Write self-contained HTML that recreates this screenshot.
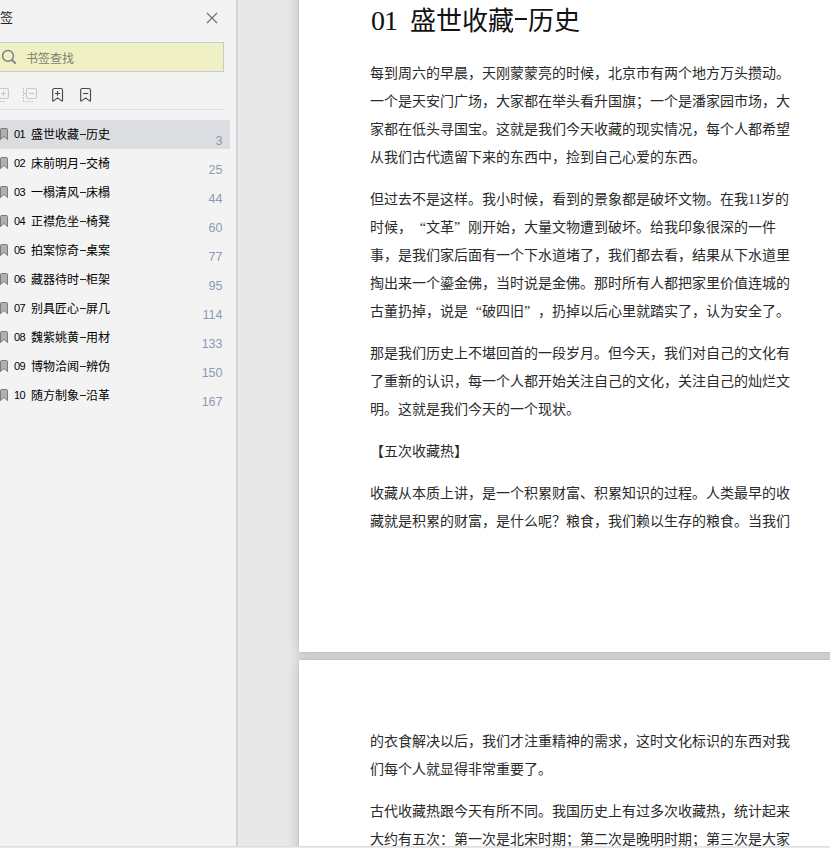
<!DOCTYPE html>
<html lang="zh-CN">
<head>
<meta charset="utf-8">
<style>
html,body{margin:0;padding:0;}
body{width:830px;height:848px;overflow:hidden;position:relative;background:#e8e8e8;font-family:"Liberation Sans",sans-serif;}
.abs{position:absolute;}
#side{left:0;top:0;width:236px;height:848px;background:#f3f3f3;}
#sideline{left:236px;top:0;width:2px;height:848px;background:#d4d5d9;}
#title{left:-13px;top:10.5px;font-size:13px;color:#222;line-height:14px;}
#search{left:-1px;top:42px;width:223px;height:28px;border:1px solid #c7cbd4;background:#eff0c4;}
#search .ph{position:absolute;left:26px;top:9px;font-size:12px;line-height:14px;color:#7e8070;}
#sep{left:0;top:109px;width:224px;height:1px;background:#dcdde0;}
#sel{left:0;top:120px;width:230px;height:29px;background:#dcdde1;}
.row{position:absolute;left:0;height:29px;width:230px;}
.row .bm{position:absolute;left:0;top:8px;}
.row .num{position:absolute;left:14px;top:7px;font-size:11px;letter-spacing:-0.6px;line-height:14px;color:#000;}
.row .txt{position:absolute;left:31px;top:7.5px;font-size:12px;line-height:14px;color:#000;}
.row .pg{position:absolute;right:7.5px;top:13.8px;font-size:12.5px;line-height:14px;color:#8c9ab5;}
#mid{left:238px;top:0;width:592px;height:848px;background:#e8e8e8;}
.page{position:absolute;left:299px;width:600px;background:#fff;}
.shd{position:absolute;left:299px;width:600px;background:#fff;box-shadow:0 0 12px 1px rgba(0,0,0,0.18), 0 0 2px 0 rgba(0,0,0,0.14);}
#p1{top:-50px;height:702px;}
#p2{top:660px;height:300px;}
#shadow{left:287px;top:0;width:12px;height:848px;background:linear-gradient(to right,rgba(0,0,0,0),rgba(0,0,0,0.12));}
#edge{left:298px;top:0;width:1px;height:848px;background:rgba(0,0,0,0.08);}
#gap{left:299px;top:652px;width:531px;height:8px;background:#d0d0d0;}
.ln{position:absolute;left:370px;margin-top:1px;font-family:"Liberation Serif",serif;font-size:14px;line-height:28px;height:28px;white-space:pre;color:#2a2a2a;}
.q{display:inline-block;width:14px;}
.hy{display:inline-block;width:6px;height:1px;background:#222;vertical-align:middle;margin:0 0.5px;position:relative;top:-1px;font-size:0;}
.hy2{display:inline-block;width:12px;height:1.5px;background:#111;vertical-align:middle;margin:0 1px 0 1px;position:relative;top:-5px;font-size:0;}
.ql{text-align:right;}
#h1{position:absolute;left:371px;top:5px;font-family:"Liberation Serif",serif;font-size:26px;line-height:32px;white-space:pre;color:#111;}
</style>
</head>
<body>
<div id="side" class="abs"></div>
<div id="sideline" class="abs"></div>
<div id="title" class="abs">书签</div>
<svg class="abs" style="left:206px;top:12px" width="12" height="12" viewBox="0 0 12 12"><path d="M1 1L11 11M11 1L1 11" stroke="#6d6d6d" stroke-width="1.1" fill="none"/></svg>
<div id="search" class="abs">
 <svg style="position:absolute;left:2px;top:6px" width="17" height="17" viewBox="0 0 17 17"><circle cx="6" cy="6.9" r="5.4" stroke="#757f84" stroke-width="1.45" fill="none"/><path d="M9.9 10.8L13.7 14.6" stroke="#757f84" stroke-width="1.8"/></svg>
 <div class="ph">书签查找</div>
</div>
<!-- toolbar -->
<svg class="abs" style="left:0;top:84px" width="100" height="22" viewBox="0 0 100 22">
 <g stroke="#c8c8c8" stroke-width="1.1" fill="none">
  <rect x="-1.6" y="4.5" width="10" height="10" rx="1.6"/>
  <path d="M3.5 7v5M1 9.5h5"/>
  <path d="M0 17.5h6" stroke-dasharray="2 1"/>
  <path d="M23.5 4v14" stroke-dasharray="2 1"/>
  <path d="M23.5 9.5h3"/>
  <rect x="26.5" y="4.5" width="10" height="10" rx="1.6"/>
  <path d="M29 9.5h5"/>
  <path d="M25 17.5h9" stroke-dasharray="2 1"/>
 </g>
 <g stroke="#4a4a4a" stroke-width="1.15" fill="none" stroke-linejoin="round">
  <path d="M52.7 6Q52.7 4.5 54.2 4.5H61.0Q62.5 4.5 62.5 6V16.4Q62.5 17.6 61.6 16.9L57.6 13.9L53.6 16.9Q52.7 17.6 52.7 16.4Z"/>
  <path d="M57.5 7v4.8M55 9.5h5"/>
  <path d="M80.7 6Q80.7 4.5 82.2 4.5H89.0Q90.5 4.5 90.5 6V16.4Q90.5 17.6 89.60000000000001 16.9L85.60000000000001 13.9L81.60000000000001 16.9Q80.7 17.6 80.7 16.4Z"/>
  <path d="M83.1 9.5h5.1"/>
 </g>
</svg>
<div id="sep" class="abs"></div>
<div id="sel" class="abs"></div>
<div class="row" style="top:120px"><svg class="bm" width="9" height="13" viewBox="0 0 9 13"><path d="M0.5 1.5Q0.5 0.5 1.5 0.5H6.5Q7.5 0.5 7.5 1.5V11.6L4 8.4L0.5 11.6Z" fill="#b0b0b0" stroke="#7a7a7a" stroke-width="1" stroke-linejoin="round"/></svg><div class="num">01</div><div class="txt">盛世收藏<span class="hy">-</span>历史</div><div class="pg">3</div></div>
<div class="row" style="top:149px"><svg class="bm" width="9" height="13" viewBox="0 0 9 13"><path d="M0.5 1.5Q0.5 0.5 1.5 0.5H6.5Q7.5 0.5 7.5 1.5V11.6L4 8.4L0.5 11.6Z" fill="#b0b0b0" stroke="#7a7a7a" stroke-width="1" stroke-linejoin="round"/></svg><div class="num">02</div><div class="txt">床前明月<span class="hy">-</span>交椅</div><div class="pg">25</div></div>
<div class="row" style="top:178px"><svg class="bm" width="9" height="13" viewBox="0 0 9 13"><path d="M0.5 1.5Q0.5 0.5 1.5 0.5H6.5Q7.5 0.5 7.5 1.5V11.6L4 8.4L0.5 11.6Z" fill="#b0b0b0" stroke="#7a7a7a" stroke-width="1" stroke-linejoin="round"/></svg><div class="num">03</div><div class="txt">一榻清风<span class="hy">-</span>床榻</div><div class="pg">44</div></div>
<div class="row" style="top:207px"><svg class="bm" width="9" height="13" viewBox="0 0 9 13"><path d="M0.5 1.5Q0.5 0.5 1.5 0.5H6.5Q7.5 0.5 7.5 1.5V11.6L4 8.4L0.5 11.6Z" fill="#b0b0b0" stroke="#7a7a7a" stroke-width="1" stroke-linejoin="round"/></svg><div class="num">04</div><div class="txt">正襟危坐<span class="hy">-</span>椅凳</div><div class="pg">60</div></div>
<div class="row" style="top:236px"><svg class="bm" width="9" height="13" viewBox="0 0 9 13"><path d="M0.5 1.5Q0.5 0.5 1.5 0.5H6.5Q7.5 0.5 7.5 1.5V11.6L4 8.4L0.5 11.6Z" fill="#b0b0b0" stroke="#7a7a7a" stroke-width="1" stroke-linejoin="round"/></svg><div class="num">05</div><div class="txt">拍案惊奇<span class="hy">-</span>桌案</div><div class="pg">77</div></div>
<div class="row" style="top:265px"><svg class="bm" width="9" height="13" viewBox="0 0 9 13"><path d="M0.5 1.5Q0.5 0.5 1.5 0.5H6.5Q7.5 0.5 7.5 1.5V11.6L4 8.4L0.5 11.6Z" fill="#b0b0b0" stroke="#7a7a7a" stroke-width="1" stroke-linejoin="round"/></svg><div class="num">06</div><div class="txt">藏器待时<span class="hy">-</span>柜架</div><div class="pg">95</div></div>
<div class="row" style="top:294px"><svg class="bm" width="9" height="13" viewBox="0 0 9 13"><path d="M0.5 1.5Q0.5 0.5 1.5 0.5H6.5Q7.5 0.5 7.5 1.5V11.6L4 8.4L0.5 11.6Z" fill="#b0b0b0" stroke="#7a7a7a" stroke-width="1" stroke-linejoin="round"/></svg><div class="num">07</div><div class="txt">别具匠心<span class="hy">-</span>屏几</div><div class="pg">114</div></div>
<div class="row" style="top:323px"><svg class="bm" width="9" height="13" viewBox="0 0 9 13"><path d="M0.5 1.5Q0.5 0.5 1.5 0.5H6.5Q7.5 0.5 7.5 1.5V11.6L4 8.4L0.5 11.6Z" fill="#b0b0b0" stroke="#7a7a7a" stroke-width="1" stroke-linejoin="round"/></svg><div class="num">08</div><div class="txt">魏紫姚黄<span class="hy">-</span>用材</div><div class="pg">133</div></div>
<div class="row" style="top:352px"><svg class="bm" width="9" height="13" viewBox="0 0 9 13"><path d="M0.5 1.5Q0.5 0.5 1.5 0.5H6.5Q7.5 0.5 7.5 1.5V11.6L4 8.4L0.5 11.6Z" fill="#b0b0b0" stroke="#7a7a7a" stroke-width="1" stroke-linejoin="round"/></svg><div class="num">09</div><div class="txt">博物洽闻<span class="hy">-</span>辨伪</div><div class="pg">150</div></div>
<div class="row" style="top:381px"><svg class="bm" width="9" height="13" viewBox="0 0 9 13"><path d="M0.5 1.5Q0.5 0.5 1.5 0.5H6.5Q7.5 0.5 7.5 1.5V11.6L4 8.4L0.5 11.6Z" fill="#b0b0b0" stroke="#7a7a7a" stroke-width="1" stroke-linejoin="round"/></svg><div class="num">10</div><div class="txt">随方制象<span class="hy">-</span>沿革</div><div class="pg">167</div></div>
<div class="shd" style="top:-50px;height:702px"></div>
<div class="shd" style="top:660px;height:300px"></div>
<div id="p1" class="page"></div>
<div id="p2" class="page"></div>
<div id="h1"><span style="font-size:28px;letter-spacing:-1px">01</span>  盛世收藏<span class="hy2">-</span>历史</div>
<div class="ln" style="top:59px">每到周六的早晨，天刚蒙蒙亮的时候，北京市有两个地方万头攒动。</div>
<div class="ln" style="top:87px">一个是天安门广场，大家都在举头看升国旗；一个是潘家园市场，大</div>
<div class="ln" style="top:115px">家都在低头寻国宝。这就是我们今天收藏的现实情况，每个人都希望</div>
<div class="ln" style="top:143px">从我们古代遗留下来的东西中，捡到自己心爱的东西。</div>
<div class="ln" style="top:185px">但过去不是这样。我小时候，看到的景象都是破坏文物。在我11岁的</div>
<div class="ln" style="top:213px">时候，<span class="q ql">“</span>文革<span class="q">”</span>刚开始，大量文物遭到破坏。给我印象很深的一件</div>
<div class="ln" style="top:241px">事，是我们家后面有一个下水道堵了，我们都去看，结果从下水道里</div>
<div class="ln" style="top:269px">掏出来一个鎏金佛，当时说是金佛。那时所有人都把家里价值连城的</div>
<div class="ln" style="top:297px">古董扔掉，说是<span class="q ql">“</span>破四旧<span class="q">”</span>，扔掉以后心里就踏实了，认为安全了。</div>
<div class="ln" style="top:339px">那是我们历史上不堪回首的一段岁月。但今天，我们对自己的文化有</div>
<div class="ln" style="top:367px">了重新的认识，每一个人都开始关注自己的文化，关注自己的灿烂文</div>
<div class="ln" style="top:395px">明。这就是我们今天的一个现状。</div>
<div class="ln" style="top:437px">【五次收藏热】</div>
<div class="ln" style="top:479px">收藏从本质上讲，是一个积累财富、积累知识的过程。人类最早的收</div>
<div class="ln" style="top:507px">藏就是积累的财富，是什么呢？粮食，我们赖以生存的粮食。当我们</div>
<div class="ln" style="top:727px">的衣食解决以后，我们才注重精神的需求，这时文化标识的东西对我</div>
<div class="ln" style="top:755px">们每个人就显得非常重要了。</div>
<div class="ln" style="top:797px">古代收藏热跟今天有所不同。我国历史上有过多次收藏热，统计起来</div>
<div class="ln" style="top:825px">大约有五次：第一次是北宋时期；第二次是晚明时期；第三次是大家</div>
<div class="abs" style="left:0;top:846px;width:830px;height:1px;background:#e0e0e0"></div>
<div class="abs" style="left:0;top:847px;width:830px;height:1px;background:#e9e9e9"></div>
</body>
</html>
